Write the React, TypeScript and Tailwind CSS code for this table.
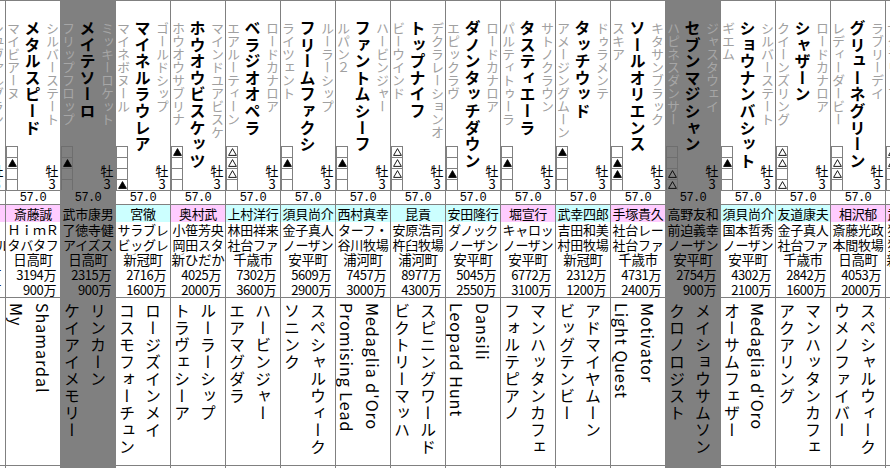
import React from 'react';

type Horse = {
    name: string;
    sire: string;
    dam: string;
    marks: number[]; // 0 = 空, 1 = ▲, 2 = △
    jockey: string;
    east: boolean;
    owner: string;
    breeder: string;
    loc: string;
    e1: string;
    e2: string;
    ps: string;
    pd: string;
    gray?: boolean;
};

const horses: Horse[] = [
    { name: 'ダイシンガリバー', sire: 'シュヴァルグラン', dam: 'ダイシンリーダー', marks: [0, 0, 0, 0], jockey: '辰己長', east: true, owner: '大八木・', breeder: 'タイヘイル', loc: '', e1: '1000', e2: '400', ps: 'ダイワメジャー', pd: 'リーダー' },
    { name: 'メタルスピード', sire: 'シルバーステート', dam: 'マイビアーヌ', marks: [0, 1, 0, 0], jockey: '斎藤誠', east: true, owner: 'ＨｉｍＲ', breeder: 'タバタフ', loc: '日高町', e1: '3194', e2: '900', ps: 'Shamardal', pd: 'My' },
    { name: 'メイテソーロ', sire: 'ミッキーロケット', dam: 'フリップフロップ', marks: [0, 1, 0, 0], jockey: '武市康男', east: true, owner: '了徳寺健', breeder: 'アイズス', loc: '日高町', e1: '2315', e2: '900', ps: 'リンカーン', pd: 'ケイアイメモリー', gray: true },
    { name: 'マイネルラウレア', sire: 'ゴールドシップ', dam: 'マイネボヌール', marks: [0, 0, 0, 1], jockey: '宮徹', east: false, owner: 'サラブレ', breeder: 'ビッグレ', loc: '新冠町', e1: '2716', e2: '1600', ps: 'ロージズインメイ', pd: 'コスモフォーチュン' },
    { name: 'ホウオウビスケッツ', sire: 'マインドユアビスケ', dam: 'ホウオウサブリナ', marks: [1, 0, 0, 0], jockey: '奥村武', east: true, owner: '小笹芳央', breeder: '岡田スタ', loc: '新ひだか', e1: '4025', e2: '2000', ps: 'ルーラーシップ', pd: 'トラヴェシーア' },
    { name: 'ベラジオオペラ', sire: 'ロードカナロア', dam: 'エアルーティーン', marks: [2, 2, 2, 0], jockey: '上村洋行', east: false, owner: '林田祥来', breeder: '社台ファ', loc: '千歳市', e1: '7302', e2: '3600', ps: 'ハービンジャー', pd: 'エアマグダラ' },
    { name: 'フリームファクシ', sire: 'ルーラーシップ', dam: 'ライツェント', marks: [0, 1, 0, 0], jockey: '須貝尚介', east: false, owner: '金子真人', breeder: 'ノーザン', loc: '安平町', e1: '5609', e2: '2900', ps: 'スペシャルウィーク', pd: 'ソニンク' },
    { name: 'ファントムシーフ', sire: 'ハービンジャー', dam: 'ルパン２', marks: [0, 1, 0, 0], jockey: '西村真幸', east: false, owner: 'ターフ・', breeder: '谷川牧場', loc: '浦河町', e1: '7457', e2: '3000', ps: "Medaglia d'Oro", pd: 'Promising Lead' },
    { name: 'トップナイフ', sire: 'デクラレーションオ', dam: 'ビーウインド', marks: [2, 2, 2, 0], jockey: '昆貢', east: false, owner: '安原浩司', breeder: '杵臼牧場', loc: '浦河町', e1: '8977', e2: '4300', ps: 'スピニングワールド', pd: 'ビクトリーマッハ' },
    { name: 'ダノンタッチダウン', sire: 'ロードカナロア', dam: 'エピックラヴ', marks: [0, 0, 1, 0], jockey: '安田隆行', east: false, owner: 'ダノック', breeder: 'ノーザン', loc: '安平町', e1: '5045', e2: '2550', ps: 'Dansili', pd: 'Leopard Hunt' },
    { name: 'タスティエーラ', sire: 'サトノクラウン', dam: 'パルティトゥーラ', marks: [0, 1, 0, 0], jockey: '堀宣行', east: true, owner: 'キャロッ', breeder: 'ノーザン', loc: '安平町', e1: '6772', e2: '3100', ps: 'マンハッタンカフェ', pd: 'フォルテピアノ' },
    { name: 'タッチウッド', sire: 'ドゥラメンテ', dam: 'アメージングムーン', marks: [1, 0, 0, 0], jockey: '武幸四郎', east: false, owner: '吉田和美', breeder: '村田牧場', loc: '新冠町', e1: '2312', e2: '1200', ps: 'アドマイヤムーン', pd: 'ビッグテンビー' },
    { name: 'ソールオリエンス', sire: 'キタサンブラック', dam: 'スキア', marks: [0, 1, 1, 0], jockey: '手塚貴久', east: true, owner: '社台レー', breeder: '社台ファ', loc: '千歳市', e1: '4731', e2: '2400', ps: 'Motivator', pd: 'Light Quest' },
    { name: 'セブンマジシャン', sire: 'ジャスタウェイ', dam: 'ハピネスダンサー', marks: [0, 0, 2, 2], jockey: '高野友和', east: false, owner: '前迫義幸', breeder: 'ノーザン', loc: '安平町', e1: '2754', e2: '900', ps: 'メイショウサムソン', pd: 'クロノロジスト', gray: true },
    { name: 'ショウナンバシット', sire: 'シルバーステート', dam: 'ギエム', marks: [0, 1, 0, 0], jockey: '須貝尚介', east: false, owner: '国本哲秀', breeder: 'ノーザン', loc: '安平町', e1: '4302', e2: '2100', ps: "Medaglia d'Oro", pd: 'オーサムフェザー' },
    { name: 'シャザーン', sire: 'ロードカナロア', dam: 'クイーンズリング', marks: [2, 2, 0, 2], jockey: '友道康夫', east: false, owner: '金子真人', breeder: '社台ファ', loc: '千歳市', e1: '2842', e2: '1600', ps: 'マンハッタンカフェ', pd: 'アクアリング' },
    { name: 'グリューネグリーン', sire: 'ラブリーデイ', dam: 'レディーダービー', marks: [0, 2, 2, 0], jockey: '相沢郁', east: true, owner: '斎藤光政', breeder: '本間牧場', loc: '日高町', e1: '4053', e2: '2000', ps: 'スペシャルウィーク', pd: 'ウメノファイバー' },
    { name: 'ゴールデンハインド', sire: 'ゴールドシップ', dam: 'サクラリーフ', marks: [2, 2, 0, 0], jockey: '武市康男', east: true, owner: '猪熊広次', breeder: '猪野毛牧', loc: '新ひだか', e1: '4350', e2: '2000', ps: 'スペシャルウィーク', pd: 'サクラ' },
];

function Mark({ kind }: { kind: number }) {
    if (kind === 0) return null;
    return (
        <svg width="9" height="8" viewBox="0 0 9 8">
            <polygon
                points="4.5,0.6 8.4,7.4 0.6,7.4"
                fill={kind === 1 ? '#000' : 'none'}
                stroke="#000"
                strokeWidth="0.9"
            />
        </svg>
    );
}

function Column({ h }: { h: Horse }) {
    const sub = h.gray ? 'text-[#a6a6a6]' : 'text-[#a0a0a0]';
    const jbg = h.gray ? '' : h.east ? 'bg-[#ffccff]' : 'bg-[#ccffff]';
    return (
        <div className={`flex w-[55px] shrink-0 flex-col border-l border-[#808080] ${h.gray ? 'bg-[#808080]' : 'bg-white'}`}>
            {/* 馬名・父・母 */}
            <div className="flex h-[190px] border-b border-[#808080]">
                <div className="flex w-[14px] flex-col">
                    <div className={`pt-[21px] pl-[1px] text-[13px] leading-[14px] whitespace-nowrap [writing-mode:vertical-rl] ${sub}`}>
                        {h.dam}
                    </div>
                    <div className="mt-auto flex flex-col">
                        {h.marks.map((m, i) => (
                            <div
                                key={i}
                                className={`flex h-[11px] w-[12px] items-center justify-center border-x border-t ${h.gray ? 'border-[#6e6e6e]' : 'border-[#808080]'}`}
                            >
                                <Mark kind={m} />
                            </div>
                        ))}
                    </div>
                </div>
                <div className="flex flex-1 justify-center">
                    <div className="pt-[19px] text-[16px] font-bold leading-[16px] tracking-[0.6px] whitespace-nowrap text-black [writing-mode:vertical-rl]">
                        {h.name}
                    </div>
                </div>
                <div className="mr-[1px] flex w-[14px] flex-col items-center">
                    <div className={`pt-[21px] text-[13px] leading-[14px] whitespace-nowrap [writing-mode:vertical-rl] ${sub}`}>
                        {h.sire}
                    </div>
                    <div className="mt-auto text-center text-[13px] leading-[13px] text-black">
                        <div>牡</div>
                        <div>3</div>
                    </div>
                </div>
            </div>

            {/* 斤量 */}
            <div className="flex h-[14px] items-center justify-center border-b border-[#808080] font-['Liberation_Mono',monospace] text-[12px] leading-none tracking-[-0.6px] text-black">
                57.0
            </div>

            {/* 調教師・馬主・生産者・産地・賞金 */}
            <div className={`flex h-[17px] items-center justify-center overflow-hidden whitespace-nowrap text-[13px] leading-none tracking-[-0.3px] text-black ${jbg}`}>
                {h.jockey}
            </div>
            <div className="flex h-[15px] items-center justify-center overflow-hidden whitespace-nowrap text-[13px] leading-none tracking-[-0.3px] text-black">
                {h.owner}
            </div>
            <div className="flex h-[15px] items-center justify-center overflow-hidden whitespace-nowrap text-[13px] leading-none tracking-[-0.3px] text-black">
                {h.breeder}
            </div>
            <div className="flex h-[15px] items-center justify-center overflow-hidden whitespace-nowrap text-[13.5px] leading-none tracking-[-0.3px] text-black">
                {h.loc}
            </div>
            <div className="flex h-[15px] items-center justify-end overflow-hidden pr-[4px] whitespace-nowrap text-[13px] leading-none tracking-[-0.4px] text-black">
                {h.e1}万
            </div>
            <div className="flex h-[16px] items-center justify-end overflow-hidden border-b border-[#808080] pr-[4px] whitespace-nowrap text-[13px] leading-none tracking-[-0.4px] text-black">
                {h.e2}万
            </div>

            {/* 母の父・祖母 */}
            <div className="flex h-[168px] gap-[10px] overflow-hidden border-b border-[#808080] pt-[5px] pl-[3px]">
                <div className="w-[16px] text-[16px] leading-[16px] tracking-[1px] whitespace-nowrap text-black [writing-mode:vertical-rl]">
                    {h.pd}
                </div>
                <div className="w-[16px] text-[16px] leading-[16px] tracking-[1px] whitespace-nowrap text-black [writing-mode:vertical-rl]">
                    {h.ps}
                </div>
            </div>
            <div className="flex-1" />
        </div>
    );
}

export default function App() {
    return (
        <div className="h-[468px] w-[890px] overflow-hidden bg-white font-['Noto_Sans_CJK_JP',sans-serif]">
            <div className="flex h-[468px] border-t border-[#808080]">
                <div className="ml-[-50px] flex">
                    {horses.map((h, i) => (
                        <Column key={i} h={h} />
                    ))}
                </div>
            </div>
        </div>
    );
}
